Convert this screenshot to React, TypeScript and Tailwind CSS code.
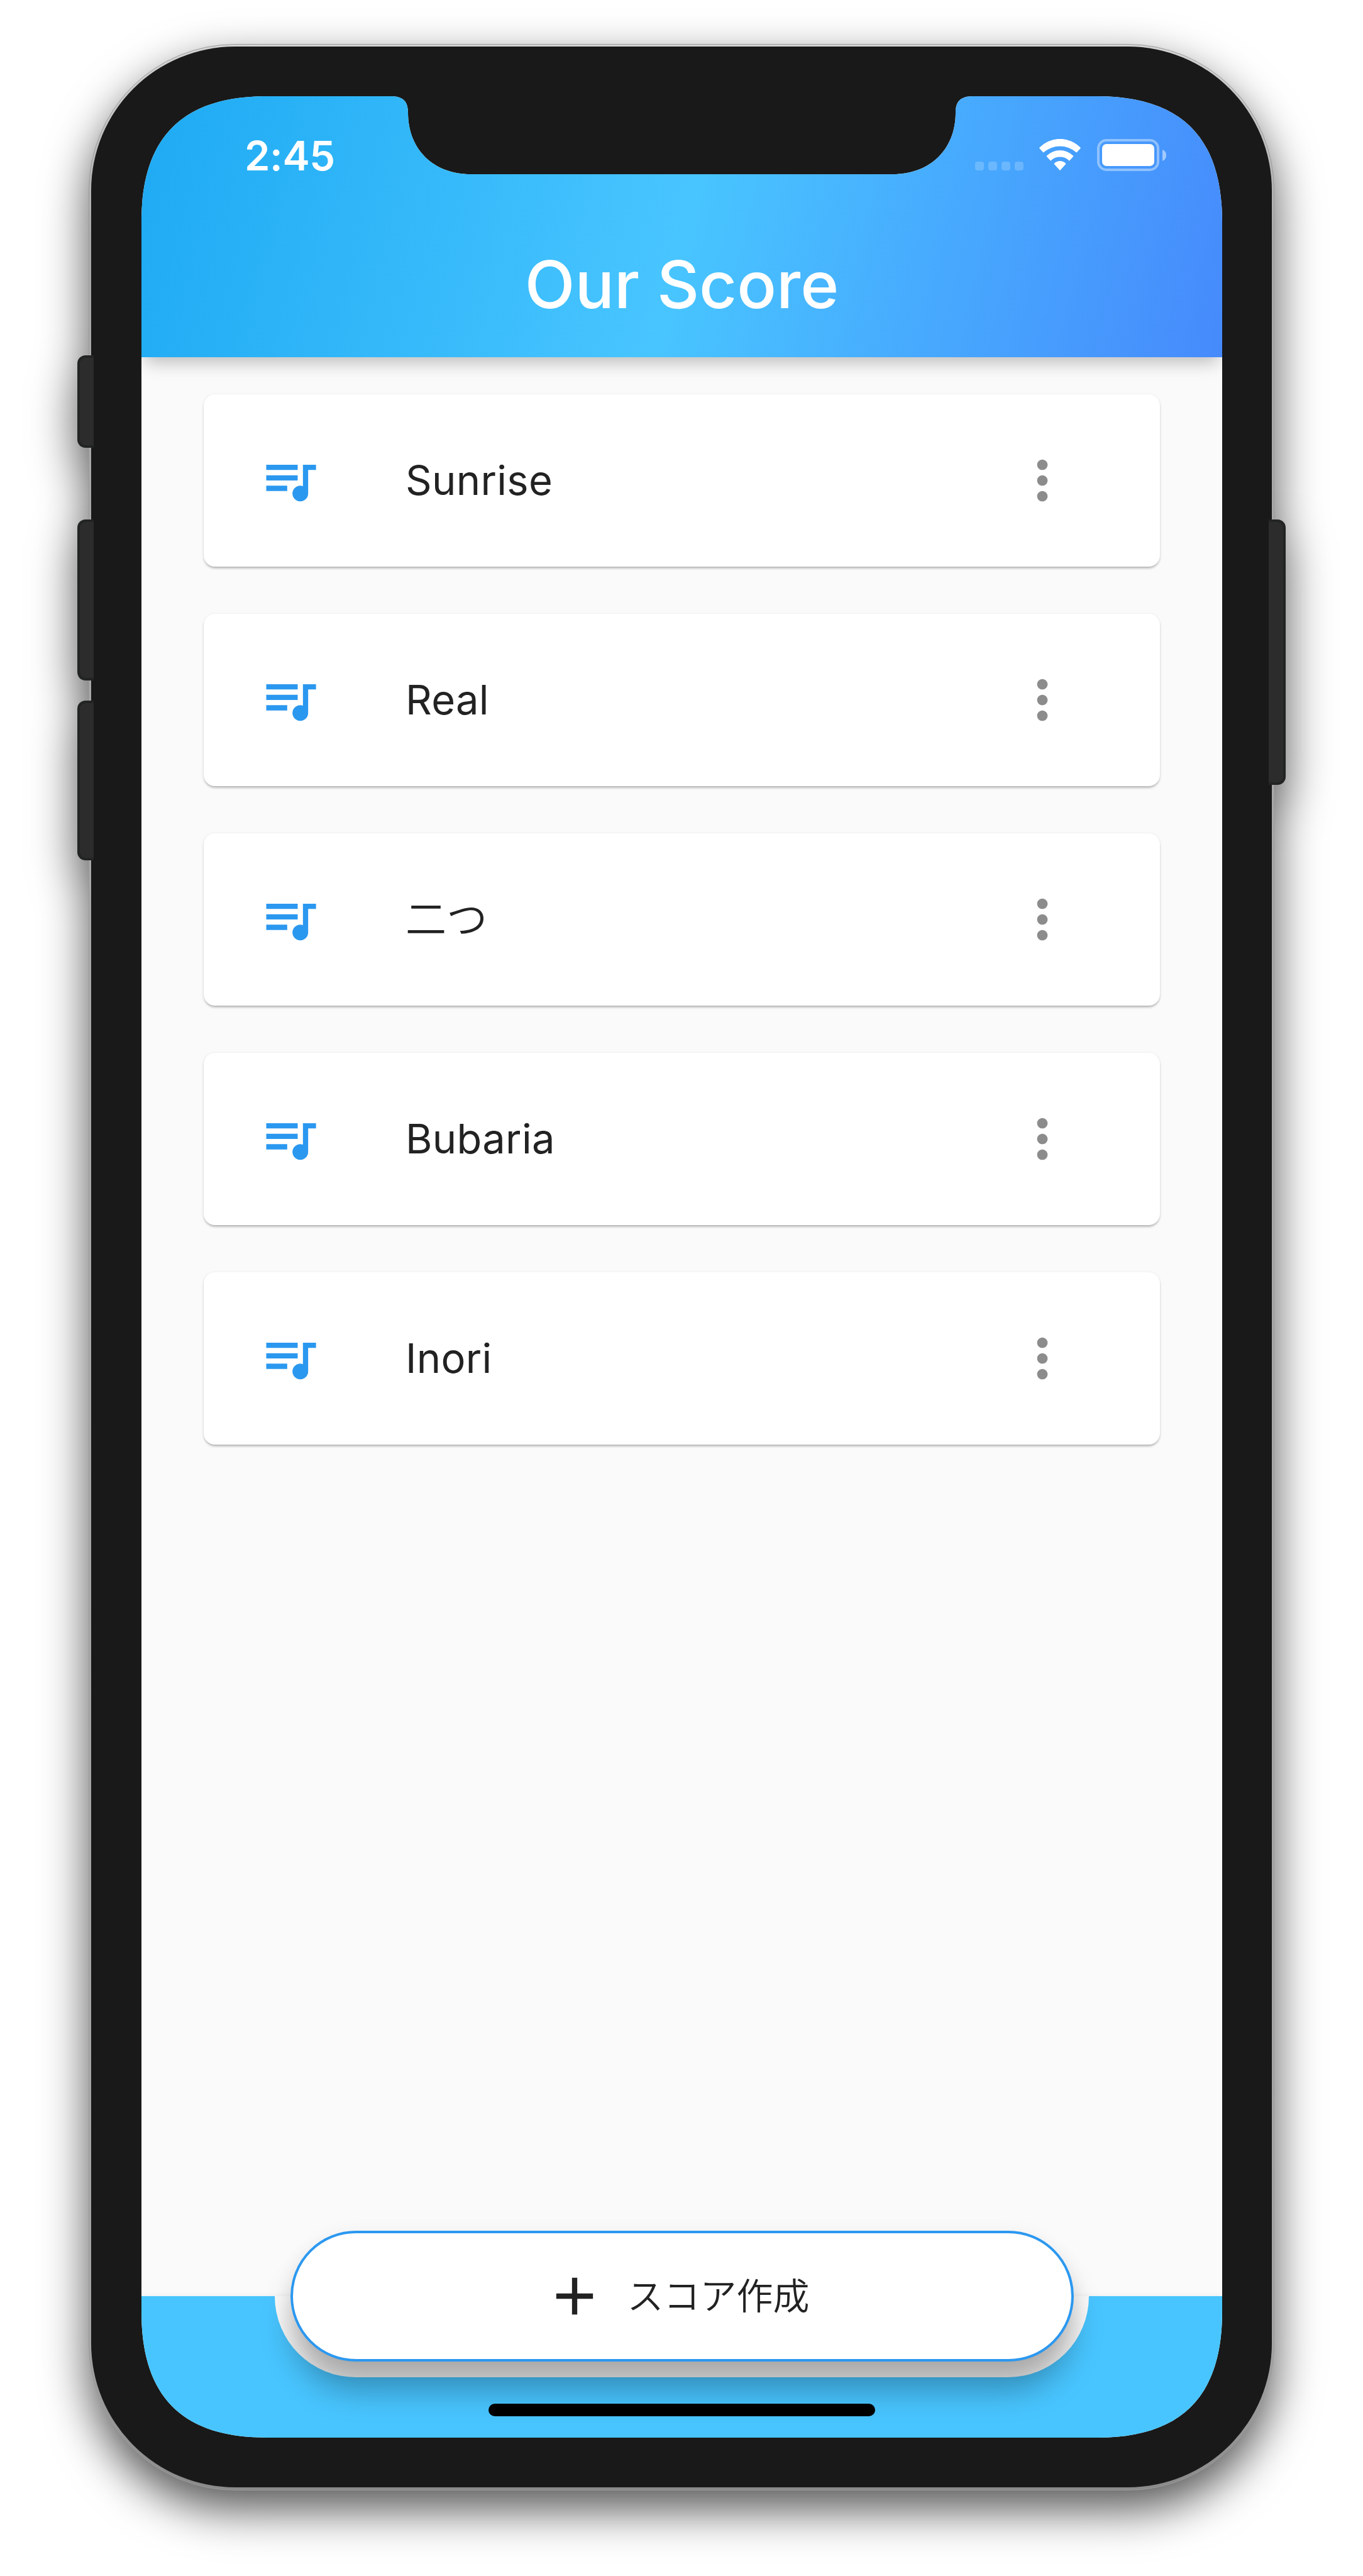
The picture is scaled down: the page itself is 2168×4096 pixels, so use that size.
const songs = [
  { title: "Sunrise", weight: "font-normal" },
  { title: "Real", weight: "font-normal" },
  { title: "二つ", weight: "font-[350]" },
  { title: "Bubaria", weight: "font-normal" },
  { title: "Inori", weight: "font-normal" },
];

function QueueMusicIcon() {
  return (
    <svg viewBox="0 0 24 24" className="size-[100px] shrink-0 fill-[#2b98f0]">
      <path d="M15 6H3v2h12V6zm0 4H3v2h12v-2zM3 16h8v-2H3v2zM17 6v8.18c-.31-.11-.65-.18-1-.18-1.66 0-3 1.34-3 3s1.34 3 3 3 3-1.34 3-3V8h3V6h-5z" />
    </svg>
  );
}

function MoreVertIcon() {
  return (
    <svg viewBox="0 0 24 24" className="size-[100px] shrink-0 fill-[#8c8c8c]">
      <path d="M12 8c1.1 0 2-.9 2-2s-.9-2-2-2-2 .9-2 2 .9 2 2 2zm0 2c-1.1 0-2 .9-2 2s.9 2 2 2 2-.9 2-2-.9-2-2-2zm0 6c-1.1 0-2 .9-2 2s.9 2 2 2 2-.9 2-2-.9-2-2-2z" />
    </svg>
  );
}

function WifiIcon() {
  return (
    <svg viewBox="0 0 66 50" className="h-[50px] w-[66px] self-start fill-white">
      <path d="M0.600 13.600A45 45 0 0 1 65.400 13.600Q66.200 14.400 65.500 15.100L60 21Q59.300 21.700 58.500 21A39.300 39.300 0 0 0 7.500 21Q6.700 21.700 6 21L.5 15.100Q-.2 14.400 .6 13.600z" />
      <path d="M12.200 26.500A29.500 29.500 0 0 1 53.800 26.500Q54.700 27.200 54 27.900L48.400 34.200Q47.700 34.800 47 34.100A20 20 0 0 0 19 34.100Q18.300 34.800 17.600 34.200L12 27.900Q11.300 27.200 12.200 26.500z" />
      <path d="M24 38.700A12.800 12.800 0 0 1 42 38.700Q42.700 39.400 42.100 40.100L33.600 49.500Q33 50 32.400 49.500L23.900 40.100Q23.300 39.400 24 38.700z" />
    </svg>
  );
}

function StatusBar() {
  return (
    <div className="flex h-[187px] items-center justify-between pl-[164px] pr-[89px] text-white">
      <span className="pt-px text-[65px] font-semibold leading-none tracking-[-0.4px]">2:45</span>
      <div className="flex items-center">
        <div className="mb-px mr-[25px] flex gap-[7px] self-end">
          <i className="size-[14px] rounded-[4px] bg-white/20" />
          <i className="size-[14px] rounded-[4px] bg-white/20" />
          <i className="size-[14px] rounded-[4px] bg-white/20" />
          <i className="size-[14px] rounded-[4px] bg-white/20" />
        </div>
        <WifiIcon />
        <div className="ml-[26px] h-[51px] w-[99px] rounded-[15px] border-4 border-white/40 p-[4px]">
          <div className="h-full w-full rounded-[7px] bg-white" />
        </div>
        <svg viewBox="0 0 6 18" className="ml-[5px] h-[18px] w-[6px] fill-white/50">
          <path d="M0 0C4 1.500 6 5 6 9s-2 7.500-6 9z" />
        </svg>
      </div>
    </div>
  );
}

function SongCard({ title, weight }: { title: string; weight: string }) {
  return (
    <li className="flex h-[274px] items-center rounded-[18px] bg-white pl-[87px] pr-[137px] shadow-[0_4px_4px_-2px_rgba(0,0,0,0.28),0_1px_4px_rgba(0,0,0,0.12)]">
      <QueueMusicIcon />
      <span className={"ml-[134px] flex-1 pb-[2px] text-[65px] leading-none tracking-[0.3px] text-[#222] " + weight}>
        {title}
      </span>
      <MoreVertIcon />
    </li>
  );
}

function SideButton({ className }: { className: string }) {
  return (
    <div className={"absolute border-4 border-[#222424] bg-[#2c2c2c] " + className} />
  );
}

export default function App() {
  return (
    <div className="flex h-[4096px] w-[2168px] items-start justify-center overflow-hidden bg-white pt-[70px] font-[Inter,'Noto_Sans_CJK_JP',sans-serif]">
      <div className="relative h-[3890px] w-[1886px] [filter:drop-shadow(0_30px_36px_rgba(0,0,0,0.67))]">
        <div className="h-full w-full rounded-[233px] border border-[#9a9a9a] bg-[linear-gradient(#d4d4d4_0,#a9a9a9_8%,#a5a5a5_94%,#8a8a8a_100%)] px-[3px] pb-[4px] pt-[3px]">
          <div className="h-full w-full rounded-[229px] bg-[#191919] pb-[78px] pl-[80px] pr-[79px] pt-[79px]">
            <div className="flex h-[3723px] w-[1719px] flex-col bg-[#fafafa] [clip-path:path('M0,200_C0,65_65,0_200,0_H396_C416,0_424,8_424,26_C424,85_465,124_524,124_H1195_C1254,124_1295,85_1295,26_C1295,8_1303,0_1323,0_H1519_C1654,0_1719,65_1719,200_V3523_C1719,3658_1654,3723_1519,3723_H200_C65,3723_0,3658_0,3523_Z')]">
              <header className="z-10 flex h-[415px] shrink-0 flex-col bg-[linear-gradient(103.58deg,#1eaaf3_0%,#48c5ff_50%,#468afc_100%)] shadow-[0_14px_26px_-6px_rgba(0,0,0,0.25)]">
                <StatusBar />
                <h1 className="flex flex-1 items-center justify-center pb-[4px] text-[104px] font-medium leading-none text-white">
                  Our Score
                </h1>
              </header>

              <ul className="flex flex-1 flex-col gap-[75px] px-[99px] pt-[59px]">
                {songs.map((song) => (
                  <SongCard key={song.title} title={song.title} weight={song.weight} />
                ))}
              </ul>

              <footer className="relative flex h-[225px] shrink-0 flex-col items-center bg-[#48c5ff] shadow-[0_0_8px_rgba(0,0,0,0.06)]">
                <div className="h-[129px] w-[1295px] rounded-b-[129px] bg-[#fafafa]" />
                <button className="absolute top-[-104px] flex h-[208px] w-[1246px] items-center justify-center gap-[33px] rounded-full border-4 border-[#2b98f0] bg-white pr-[17px] text-[58px] font-[350] text-[#222] shadow-[0_48px_52px_-4px_rgba(0,0,0,0.3),0_4px_30px_rgba(0,0,0,0.06)]">
                  <svg viewBox="0 0 24 24" className="size-[100px] fill-[#222]">
                    <path d="M19 13h-6v6h-2v-6H5v-2h6V5h2v6h6v2z" />
                  </svg>
                  スコア作成
                </button>
                <div className="relative mt-[42px] h-[20px] w-[615px] rounded-full bg-black" />
              </footer>
            </div>
          </div>
        </div>
        <SideButton className="left-[-18px] top-[495px] h-[147px] w-[26px] rounded-l-[13px] border-r-0" />
        <SideButton className="left-[-18px] top-[756px] h-[256px] w-[26px] rounded-l-[13px] border-r-0" />
        <SideButton className="left-[-18px] top-[1044px] h-[254px] w-[26px] rounded-l-[13px] border-r-0" />
        <SideButton className="right-[-18px] top-[756px] h-[422px] w-[27px] rounded-r-[13px] border-l-0" />
      </div>
    </div>
  );
}
